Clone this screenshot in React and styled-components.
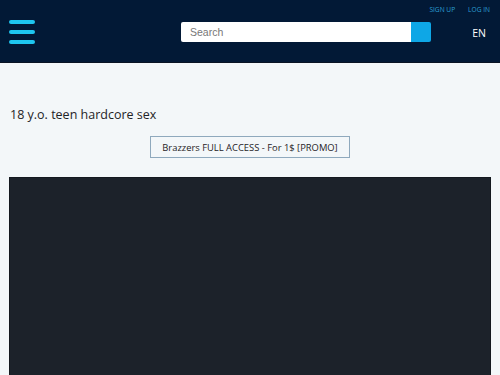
import React from "react";
import styled, { createGlobalStyle } from "styled-components";

const Global = createGlobalStyle`
  html, body { margin: 0; padding: 0; background: #f3f7f9; }
  body { font-family: "Open Sans", "Noto Sans", sans-serif; overflow: hidden; }
  * { box-sizing: border-box; }
`;

const Header = styled.header`
  height: 63px;
  background: #021936;
  border-bottom: 1px solid #0a1424;
  display: flex;
  align-items: center;
  padding: 0 14px 0 9px;
  position: relative;
`;

const Burger = styled.button`
  width: 26px;
  padding: 0;
  margin: 2px 0 0;
  border: 0;
  background: none;
  display: flex;
  flex-direction: column;
  gap: 6px;
`;

const Bar = styled.span`
  display: block;
  height: 4px;
  border-radius: 2px;
  background: #1ec6f0;
`;

const SearchForm = styled.form`
  display: flex;
  margin-left: 146px;
  margin-top: 2px;
`;

const SearchInput = styled.input`
  width: 230px;
  height: 20px;
  border: 0;
  border-radius: 2px 0 0 2px;
  padding: 0 9px;
  font-family: "Liberation Sans", Arial, sans-serif;
  font-size: 10.5px;
  color: #333;
  background: #fff;
  outline: none;
  &::placeholder { color: #777; }
`;

const SearchButton = styled.button`
  width: 20px;
  height: 20px;
  border: 0;
  padding: 0;
  border-radius: 0 2px 2px 0;
  background: #0ea7e6;
`;

const TopLinks = styled.nav`
  position: absolute;
  top: 5px;
  right: 10px;
  display: flex;
  gap: 13px;
`;

const TopLink = styled.a`
  font-size: 6.6px;
  color: #2b9fd4;
  text-decoration: none;
`;

const Lang = styled.span`
  margin-left: auto;
  margin-top: 3px;
  color: #fff;
  font-size: 10.5px;
`;

const Main = styled.main`
  padding: 42px 9px 0;
`;

const Title = styled.h1`
  margin: 0 0 0 1px;
  font-weight: 400;
  font-size: 12.5px;
  line-height: 20px;
  color: #1f2326;
`;

const PromoRow = styled.div`
  display: flex;
  justify-content: center;
  margin-top: 11px;
`;

const Promo = styled.a`
  display: inline-flex;
  align-items: center;
  height: 22px;
  padding: 0 11px;
  border: 1px solid #8fa9bd;
  background: #f3f7f9;
  color: #1f2326;
  font-size: 9.4px;
  text-decoration: none;
  white-space: nowrap;
`;

const Player = styled.div`
  margin-top: 19px;
  height: 240px;
  background: #1c222a;
  border: 1px solid #14191f;
`;

export default function App() {
  return (
    <>
      <Global />
      <Header>
        <Burger aria-label="menu">
          <Bar />
          <Bar />
          <Bar />
        </Burger>
        <SearchForm onSubmit={(e) => e.preventDefault()}>
          <SearchInput placeholder="Search" />
          <SearchButton type="submit" aria-label="search" />
        </SearchForm>
        <TopLinks>
          <TopLink href="#">SIGN UP</TopLink>
          <TopLink href="#">LOG IN</TopLink>
        </TopLinks>
        <Lang>EN</Lang>
      </Header>
      <Main>
        <Title>18 y.o. teen hardcore sex</Title>
        <PromoRow>
          <Promo href="#">Brazzers FULL ACCESS - For 1$ [PROMO]</Promo>
        </PromoRow>
        <Player />
      </Main>
    </>
  );
}
